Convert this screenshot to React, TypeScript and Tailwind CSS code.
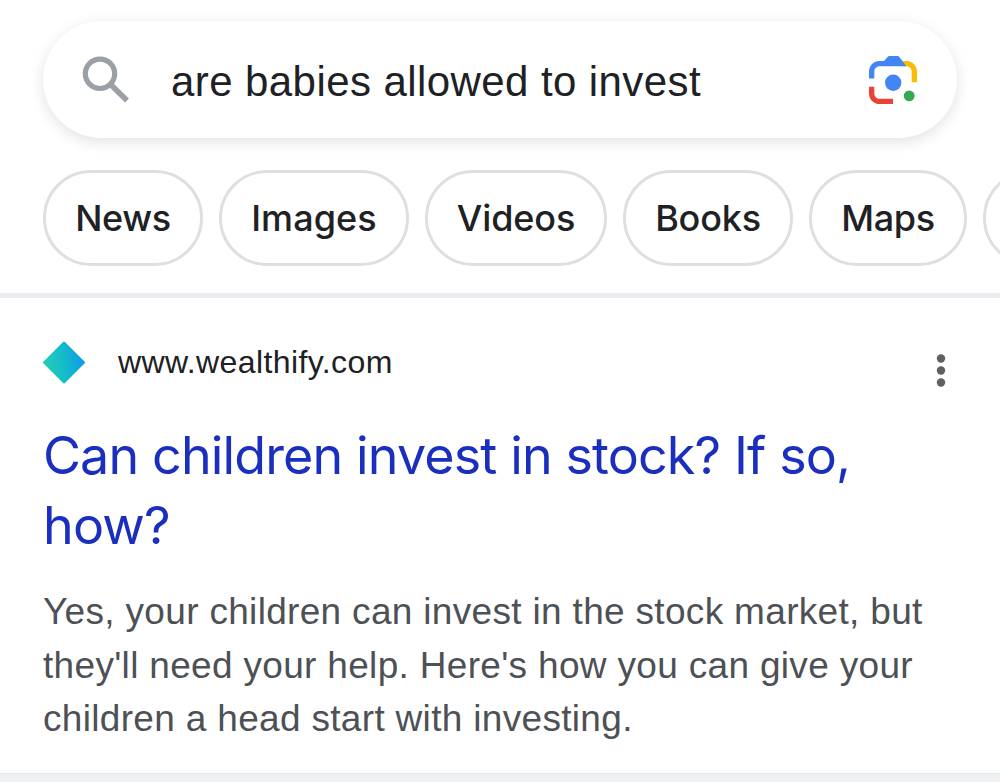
import { clsx } from 'clsx';

const filters = [
  { label: 'News', width: 'w-[160px]', spacing: 'tracking-[-0.4px]' },
  { label: 'Images', width: 'w-[190px]', spacing: 'tracking-[0.1px]' },
  { label: 'Videos', width: 'w-[182px]', spacing: 'tracking-[-0.1px]' },
  { label: 'Books', width: 'w-[170px]', spacing: 'tracking-[-0.2px]' },
  { label: 'Maps', width: 'w-[158px]', spacing: 'tracking-[-0.4px]' },
  { label: '', width: 'w-[160px]', spacing: 'tracking-normal' },
];

function SearchIcon() {
  return (
    <svg className="h-12 w-12 shrink-0" viewBox="0 0 48 48" fill="none" stroke="#9aa0a6">
      <circle cx="18" cy="17.8" r="14.7" strokeWidth="5.2" />
      <path d="M29.6 29.4 45 44.4" strokeWidth="5.6" />
    </svg>
  );
}

function LensIcon() {
  return (
    <svg className="h-12 w-12 shrink-0" viewBox="0 0 48 48">
      <path
        fill="#fbbc04"
        d="M33 5h4.5C43.3 5 48 9.7 48 15.5v10.8h-5.3V15.5c0-3-2.4-5.3-5.4-5.3H33z"
      />
      <path
        fill="#4285f4"
        d="M0 22.6v-7C0 9.7 4.7 5 10.6 5H15l3.8-4.2c.4-.5 1-.8 1.700-.8h8c.7 0 1.300.3 1.700.8l7.100 9.400H10.600c-3 0-5.300 2.300-5.300 5.300v7.100z"
      />
      <path
        fill="#ea4335"
        d="M0 30.7h5.3v6.7c0 3 2.4 5.3 5.3 5.3H24V48H10.6C4.7 48 0 43.3 0 37.4z"
      />
      <circle cx="24.2" cy="26.7" r="8.2" fill="#4285f4" />
      <circle cx="40.2" cy="39.9" r="5.4" fill="#34a853" />
    </svg>
  );
}

function SiteIcon() {
  return (
    <svg className="h-[43px] w-[43px] shrink-0" viewBox="0 0 43 43">
      <defs>
        <linearGradient id="site-gradient" x1="0" y1="0.6" x2="1" y2="0.4">
          <stop offset="0.1" stopColor="#21cbb8" />
          <stop offset="0.5" stopColor="#14bcca" />
          <stop offset="0.95" stopColor="#0d9ee4" />
        </linearGradient>
      </defs>
      <path
        d="M21 1.5 41 21.5 21 41.5 1 21.5z"
        fill="url(#site-gradient)"
        stroke="url(#site-gradient)"
        strokeWidth="2"
        strokeLinejoin="round"
      />
    </svg>
  );
}

function SearchBar() {
  return (
    <div className="mx-[43px] flex h-[117px] items-center rounded-full bg-white pr-10 pl-[39px] shadow-[0_4px_14px_rgba(32,33,36,0.13)]">
      <SearchIcon />
      <span className="mt-[5px] ml-[41px] flex-1 font-['Liberation_Sans',sans-serif] text-[42px] leading-[48px] tracking-[0.42px] whitespace-nowrap text-[#202124]">
        are babies allowed to invest
      </span>
      <LensIcon />
    </div>
  );
}

export default function App() {
  return (
    <div className="flex h-[782px] w-[1000px] flex-col overflow-hidden bg-white">
      <header className="flex h-[298px] shrink-0 flex-col border-b-[5px] border-[#ebecef] pt-[21px]">
        <SearchBar />
        {/* Filter chips run off the right edge */}
        <nav className="mt-[32px] flex gap-4 overflow-hidden pl-[43px]">
          {filters.map((filter, i) => (
            <div
              key={i}
              className={clsx(
                "flex h-24 shrink-0 items-center justify-center rounded-full border-[3px] border-[#dddfe1] font-['Inter',sans-serif] text-[36px] font-medium text-[#202124]",
                filter.width,
                filter.spacing,
              )}
            >
              {filter.label}
            </div>
          ))}
        </nav>
      </header>

      <main className="flex-1 px-[43px] pt-[43px]">
        <div className="flex h-[43px] items-center">
          <SiteIcon />
          <span className="mb-0.5 ml-8 flex-1 font-['Liberation_Sans',sans-serif] text-[32px] leading-[36px] tracking-[0.4px] text-[#202124]">
            www.wealthify.com
          </span>
          <svg className="mt-4 mr-[11px] h-8 w-2.5 overflow-visible" viewBox="0 0 10 32" fill="#5f6063">
            <circle cx="5" cy="3.5" r="4.2" />
            <circle cx="5" cy="15.5" r="4.2" />
            <circle cx="5" cy="27.5" r="4.2" />
          </svg>
        </div>
        <h3 className="mt-[37px] font-['Inter',sans-serif] text-[52px] leading-[70px] tracking-[-0.87px] whitespace-nowrap text-[#1a2fbe]">
          Can children invest in stock? If so,
          <br />
          how?
        </h3>
        <p className="mt-[24px] font-['Liberation_Sans',sans-serif] text-[37px] leading-[53.5px] tracking-[0.32px] whitespace-nowrap text-[#4d5156]">
          Yes, your children can invest in the stock market, but
          <br />
          they'll need your help. Here's how you can give your
          <br />
          children a head start with investing.
        </p>
      </main>

      <footer className="h-[9px] shrink-0 border-t border-[#e6e8ea] bg-[#eff0f2]" />
    </div>
  );
}
